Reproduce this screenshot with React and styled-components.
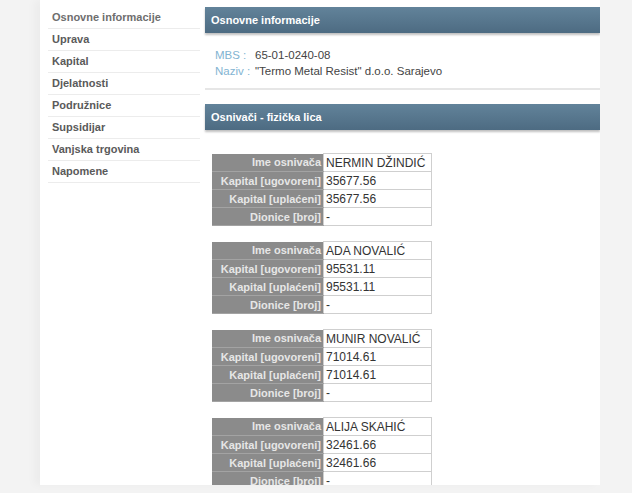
import React from 'react'
import styled, { createGlobalStyle } from 'styled-components'

const GlobalStyle = createGlobalStyle`
  body {
    margin: 0;
    background: #f3f3f3;
    font-family: "Liberation Sans", Arial, sans-serif;
  }
`;

const Page = styled.div`
  width: 632px;
  height: 493px;
  padding-left: 40px;
  box-sizing: border-box;
  background: #f3f3f3;
`;

const Panel = styled.div`
  width: 560px;
  height: 485px;
  background: #fff;
  display: flex;
  align-items: flex-start;
  padding-top: 7px;
  box-sizing: border-box;
  overflow: hidden;
  box-shadow: -6px 0 8px rgba(0, 0, 0, 0.03);
`;

const Sidebar = styled.ul`
  list-style: none;
  margin: 0 0 0 8px;
  padding: 0;
  width: 152px;
`;

const NavItem = styled.li`
  height: 22px;
  line-height: 21px;
  border-bottom: 1px solid #ececec;
  padding-left: 4px;
  font-size: 11px;
  font-weight: bold;
  color: ${p => (p.active ? '#6e6e6e' : '#5a5a5a')};
  box-sizing: border-box;
`;

const Main = styled.div`
  margin-left: 5px;
  width: 395px;
`;

const Header = styled.div`
  height: 26px;
  line-height: 26px;
  padding-left: 6px;
  background: linear-gradient(#62839a, #4d6b82);
  color: #fff;
  font-size: 11px;
  font-weight: bold;
  box-shadow: 0 2px 2px rgba(0, 0, 0, 0.25);
  margin-top: ${p => p.top || 0}px;
`;

const Info = styled.div`
  padding: 14px 10px 9px;
  border-bottom: 2px solid #e6e6e6;
  font-size: 11.5px;
  line-height: 16px;
  color: #444;
`;

const Label = styled.span`
  display: inline-block;
  width: 40px;
  color: #82b4d2;
`;

const Tables = styled.div`
  padding: 23px 0 0 7px;
  display: flex;
  flex-direction: column;
  gap: 15px;
`;

const Table = styled.table`
  border-collapse: collapse;
  width: 220px;
  font-size: 11px;
`;

const Th = styled.th`
  width: 109px;
  height: 17px;
  padding: 0 2px 0 0;
  background: #8b8b8b;
  color: #e6e6e6;
  text-align: right;
  font-weight: bold;
  border-bottom: 1px solid #a3a3a3;
  white-space: nowrap;
`;

const Td = styled.td`
  height: 17px;
  padding: 0 2px;
  border: 1px solid #cfcfcf;
  color: #333;
  font-size: 12px;
  white-space: nowrap;
`;

const nav = [
  'Osnovne informacije',
  'Uprava',
  'Kapital',
  'Djelatnosti',
  'Podružnice',
  'Supsidijar',
  'Vanjska trgovina',
  'Napomene',
];

const founders = [
  { name: 'NERMIN DŽINDIĆ', amount: '35677.56' },
  { name: 'ADA NOVALIĆ', amount: '95531.11' },
  { name: 'MUNIR NOVALIĆ', amount: '71014.61' },
  { name: 'ALIJA SKAHIĆ', amount: '32461.66' },
];

const App = () => {
  return (
    <Page>
      <GlobalStyle />
      <Panel>
        <Sidebar>
          {nav.map((n, i) => (
            <NavItem key={n} active={i === 0}>{n}</NavItem>
          ))}
        </Sidebar>
        <Main>
          <Header>Osnovne informacije</Header>
          <Info>
            <div><Label>MBS :</Label>65-01-0240-08</div>
            <div><Label>Naziv :</Label>"Termo Metal Resist" d.o.o. Sarajevo</div>
          </Info>
          <Header top={14}>Osnivači - fizička lica</Header>
          <Tables>
            {founders.map(f => (
              <Table key={f.name}>
                <tbody>
                  <tr><Th>Ime osnivača</Th><Td>{f.name}</Td></tr>
                  <tr><Th>Kapital [ugovoreni]</Th><Td>{f.amount}</Td></tr>
                  <tr><Th>Kapital [uplaćeni]</Th><Td>{f.amount}</Td></tr>
                  <tr><Th>Dionice [broj]</Th><Td>-</Td></tr>
                </tbody>
              </Table>
            ))}
          </Tables>
        </Main>
      </Panel>
    </Page>
  )
}

export default App;
